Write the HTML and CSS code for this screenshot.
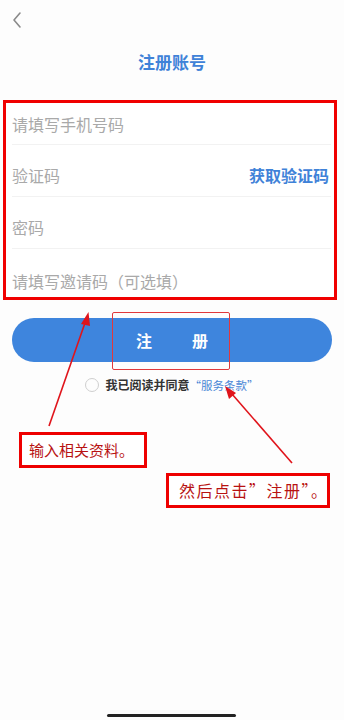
FILE: index.html
```html
<!DOCTYPE html>
<html lang="zh-CN">
<head>
    <meta charset="UTF-8">
    <meta name="viewport" content="width=device-width, initial-scale=1.0">
    <title>注册账号</title>
    <link rel="stylesheet" href="styles.css">
</head>
<body>
    <div class="page">
        <div class="nav">
            <svg class="back" width="12" height="18" viewBox="0 0 12 18">
                <path d="M9 2 L3 9 L9 16" fill="none" stroke="#8a8a8a" stroke-width="1.6" stroke-linecap="round" stroke-linejoin="round"/>
            </svg>
        </div>
        <h1 class="title">注册账号</h1>

        <!-- form, outlined in red -->
        <div class="form">
            <div class="row row-first"><span class="hint">请填写手机号码</span></div>
            <div class="row"><span class="hint">验证码</span><a class="code-link" href="#">获取验证码</a></div>
            <div class="row"><span class="hint">密码</span></div>
            <div class="row row-last"><span class="hint">请填写邀请码（可选填）</span></div>
        </div>

        <div class="submit-wrap">
            <button type="button" class="submit"><span>注</span><span>册</span></button>
            <div class="mark-btn"></div>
        </div>

        <div class="agree">
            <span class="radio"></span>
            <span class="agree-text">我已阅读并同意</span>
            <a class="terms" href="#">“服务条款”</a>
        </div>

        <!-- annotations -->
        <div class="note note-1">输入相关资料。</div>
        <div class="note note-2">然后点击”注册”。</div>
        <svg class="arrows" width="344" height="720" viewBox="0 0 344 720">
            <line x1="49" y1="426" x2="86" y2="320" stroke="#e0141b" stroke-width="1.6"/>
            <path d="M88.5 312 L81 324 L90 326 Z" fill="#e0141b"/>
            <line x1="292" y1="463" x2="232" y2="394" stroke="#e0141b" stroke-width="1.6"/>
            <path d="M225 386 L229 399 L236 393 Z" fill="#e0141b"/>
        </svg>

        <div class="home-bar"></div>
    </div>
</body>
</html>
```

FILE: styles.css
```css
body {
    margin: 0;
    padding: 0;
    background: #fff;
    font-family: "Noto Sans CJK SC", "Noto Sans", sans-serif;
    color: #333;
}
.page {
    position: relative;
    width: 344px;
    height: 720px;
    overflow: hidden;
    background: #fdfdfd;
}
.nav {
    height: 40px;
    padding: 11px 0 0 11px;
    box-sizing: border-box;
}
.back {
    display: block;
}
.title {
    margin: 7px 0 0;
    height: 30px;
    line-height: 30px;
    text-align: center;
    font-size: 17px;
    font-weight: bold;
    color: #3f82d8;
}
.form {
    margin: 23px 7px 0 3px;
    border: 3px solid #f00000;
    background: #fff;
}
.row {
    display: flex;
    align-items: center;
    justify-content: space-between;
    height: 52px;
    padding-top: 8px;
    box-sizing: border-box;
    margin: 0 3px 0 6px;
    border-bottom: 1px solid #f2f2f2;
}
.row-first {
    height: 42px;
    padding-top: 0;
}
.row-last {
    height: 48px;
    padding-top: 16px;
    border-bottom: none;
}
.hint {
    font-size: 16px;
    color: #a9a9a9;
}
.code-link {
    font-size: 16px;
    font-weight: bold;
    color: #3f82d8;
    text-decoration: none;
    margin-right: 2px;
}
.submit-wrap {
    position: relative;
    margin: 18px 12px 0;
}
.submit {
    display: flex;
    justify-content: center;
    align-items: center;
    gap: 40px;
    width: 100%;
    height: 44px;
    padding: 0;
    border: none;
    border-radius: 22px;
    background: #3e85dd;
    color: #fff;
    font-family: inherit;
    font-size: 16px;
    font-weight: bold;
}
.mark-btn {
    position: absolute;
    left: 100px;
    top: -6px;
    width: 116px;
    height: 56px;
    border: 1.5px solid #e0383c;
    border-radius: 2px;
}
.agree {
    display: flex;
    align-items: center;
    justify-content: center;
    margin-top: 14px;
    font-size: 12px;
    font-weight: bold;
}
.radio {
    width: 12px;
    height: 12px;
    border: 1px solid #cfcfcf;
    border-radius: 50%;
    margin-right: 6px;
}
.agree-text {
    color: #333;
}
.terms {
    color: #4a87d6;
    text-decoration: none;
    font-weight: normal;
    font-size: 11.5px;
}
.note {
    position: absolute;
    border: 3px solid #ee0000;
    background: #fff;
    color: #b81212;
    font-size: 15px;
    line-height: 30px;
    box-sizing: border-box;
    white-space: nowrap;
}
.note-1 {
    left: 19px;
    top: 432px;
    width: 128px;
    height: 36px;
    padding-left: 7px;
}
.note-2 {
    left: 166px;
    top: 473px;
    width: 164px;
    height: 35px;
    padding-left: 10px;
    font-size: 16px;
    letter-spacing: 1.5px;
    line-height: 29px;
}
.arrows {
    position: absolute;
    left: 0;
    top: 0;
    pointer-events: none;
}
.home-bar {
    position: absolute;
    left: 107px;
    bottom: 3px;
    width: 129px;
    height: 3px;
    border-radius: 2px;
    background: #222;
}
```
